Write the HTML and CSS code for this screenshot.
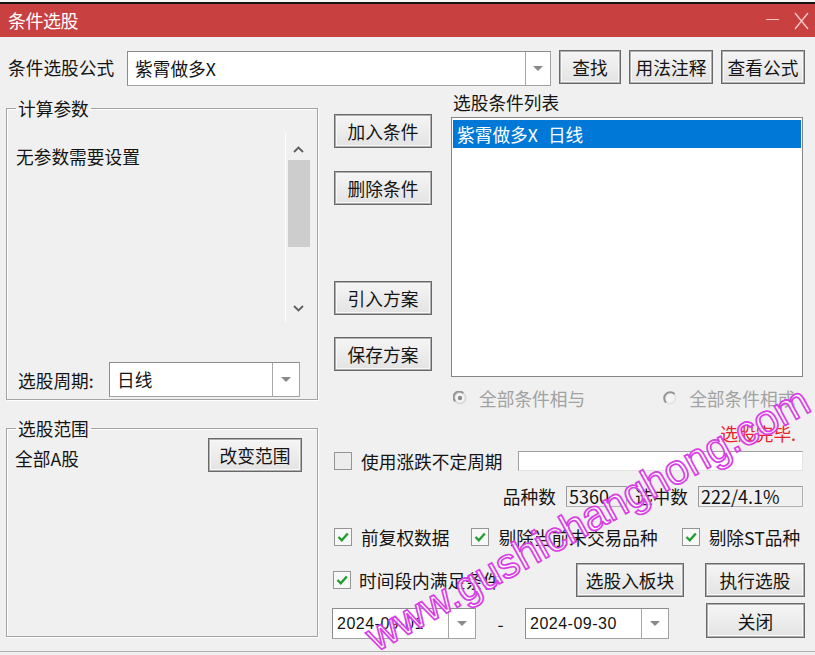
FILE: index.html
```html
<!DOCTYPE html>
<html lang="zh-CN">
<head>
<meta charset="utf-8">
<title>条件选股</title>
<link rel="stylesheet" href="styles.css">
</head>
<body>
<div class="win">
  <div class="strip"></div>
  <div class="titlebar">
    <span class="title">条件选股</span>
    <span class="ctrls">
      <span class="min"></span>
      <svg class="close" width="15" height="18" viewBox="0 0 15 18"><path d="M1 1 L14 17 M14 1 L1 17" stroke="#f6caca" stroke-width="1.3" fill="none"/></svg>
    </span>
  </div>
  <div class="body">
    <div class="formula-row">
      <span class="lbl-formula">条件选股公式</span>
      <div class="combo combo-formula"><span class="val">紫霄做多X</span><span class="drop"><i class="tri"></i></span></div>
      <button class="btn b-find">查找</button>
      <button class="btn b-wide">用法注释</button>
      <button class="btn b-wide">查看公式</button>
    </div>
    <div class="main">
      <div class="left">
        <fieldset class="grp grp-params">
          <legend>计算参数</legend>
          <div class="params">
            <span class="params-text">无参数需要设置</span>
            <div class="sb">
              <div class="sb-up"><svg width="11" height="7" viewBox="0 0 11 7"><polyline points="1,6 5.5,1.5 10,6" stroke="#5e5e5e" stroke-width="1.8" fill="none"/></svg></div>
              <div class="sb-thumb"></div>
              <div class="sb-fill"></div>
              <div class="sb-down"><svg width="11" height="7" viewBox="0 0 11 7"><polyline points="1,1 5.5,5.5 10,1" stroke="#5e5e5e" stroke-width="1.8" fill="none"/></svg></div>
            </div>
          </div>
          <div class="period">
            <span class="period-lbl">选股周期:</span>
            <div class="combo combo-period"><span class="val">日线</span><span class="drop"><i class="tri"></i></span></div>
          </div>
        </fieldset>
        <fieldset class="grp grp-range">
          <legend>选股范围</legend>
          <div class="range">
            <span class="range-text">全部A股</span>
            <button class="btn b-range">改变范围</button>
          </div>
        </fieldset>
      </div>
      <div class="right">
        <div class="upper">
          <div class="btncol">
            <button class="btn b-col b-add">加入条件</button>
            <button class="btn b-col b-del">删除条件</button>
            <button class="btn b-col b-imp">引入方案</button>
            <button class="btn b-col b-save">保存方案</button>
          </div>
          <div class="listcol">
            <div class="list-lbl">选股条件列表</div>
            <div class="listbox">
              <div class="list-item sel"><span>紫霄做多X</span><span class="tf">日线</span></div>
            </div>
            <div class="radios">
              <span class="radio r-and"><svg width="14" height="14" viewBox="0 0 14 14"><circle cx="7" cy="7" r="5.6" stroke="#d8d8d8" stroke-width="1.8" fill="#f4f4f4"/><path d="M2.2 10.2 A5.6 5.6 0 0 1 10.2 2.2" stroke="#959595" stroke-width="2" fill="none"/><circle cx="7" cy="7" r="2.2" fill="#8c8c8c"/></svg><span class="r-text">全部条件相与</span></span>
              <span class="radio r-or"><svg width="14" height="14" viewBox="0 0 14 14"><circle cx="7" cy="7" r="5.6" stroke="#e4e4e4" stroke-width="1.8" fill="#f4f4f4"/><path d="M3 11.6 A5.6 5.6 0 0 1 11.6 3" stroke="#959595" stroke-width="2" fill="none"/></svg><span class="r-text">全部条件相或</span></span>
            </div>
          </div>
        </div>
        <div class="done">选股完毕.</div>
        <div class="row-use">
          <span class="cb"></span>
          <span class="cb-text">使用涨跌不定周期</span>
          <span class="input"></span>
        </div>
        <div class="row-count">
          <span class="cnt-lbl">品种数</span>
          <span class="field f-num">5360</span>
          <span class="cnt-lbl cnt-lbl2">选中数</span>
          <span class="field f-sel">222/4.1%</span>
        </div>
        <div class="row-checks">
          <span class="cb on"><svg width="14" height="14" viewBox="0 0 14 14"><polyline points="2.5,7 5.8,10.3 11.8,3.5" stroke="#1e9e2a" stroke-width="2.3" fill="none"/></svg></span>
          <span class="cb-text">前复权数据</span>
          <span class="cb on c2"><svg width="14" height="14" viewBox="0 0 14 14"><polyline points="2.5,7 5.8,10.3 11.8,3.5" stroke="#1e9e2a" stroke-width="2.3" fill="none"/></svg></span>
          <span class="cb-text">剔除当前未交易品种</span>
          <span class="cb on c3"><svg width="14" height="14" viewBox="0 0 14 14"><polyline points="2.5,7 5.8,10.3 11.8,3.5" stroke="#1e9e2a" stroke-width="2.3" fill="none"/></svg></span>
          <span class="cb-text">剔除ST品种</span>
        </div>
        <div class="row-a">
          <span class="cb on c-time"><svg width="14" height="14" viewBox="0 0 14 14"><polyline points="2.5,7 5.8,10.3 11.8,3.5" stroke="#1e9e2a" stroke-width="2.3" fill="none"/></svg></span>
          <span class="cb-text t-time">时间段内满足条件</span>
          <button class="btn b-board">选股入板块</button>
          <button class="btn b-run">执行选股</button>
        </div>
        <div class="row-b">
          <div class="combo combo-date"><span class="val date">2024-09-01</span><span class="drop"><i class="tri"></i></span></div>
          <span class="dash">-</span>
          <div class="combo combo-date"><span class="val date">2024-09-30</span><span class="drop"><i class="tri"></i></span></div>
          <button class="btn b-close">关闭</button>
        </div>
      </div>
    </div>
  </div>
  <div class="bottom-line"></div>
  <div class="watermark">www.gushichanghong.com</div>
</div>
</body>
</html>
```
FILE: styles.css
```css
* { box-sizing: border-box; }
html, body { margin: 0; padding: 0; }
body {
  width: 815px;
  height: 655px;
  overflow: hidden;
  background: #f0f0f0;
  font-family: "Noto Sans CJK SC", "Noto Sans", sans-serif;
  font-size: 17.7px;
  color: #141414;
}
.win { position: relative; width: 815px; height: 655px; overflow: hidden; }
.strip { height: 4px; background: linear-gradient(#f6f6f6 0 45%, #151515 45%); }
.titlebar {
  height: 33px;
  background: #c94040;
  display: flex;
  align-items: center;
  padding: 0 6px 0 8px;
  color: #fff;
}
.title { font-size: 18px; line-height: 33px; letter-spacing: -0.5px; }
.ctrls { margin-left: auto; display: flex; align-items: center; }
.min { width: 13px; height: 1.5px; background: #f3c4c4; margin-right: 15px; margin-top: -2px; }
.close { display: block; }

.body { padding: 13px 10px 0 6px; }
.formula-row { display: flex; align-items: flex-start; height: 36px; padding-left: 2px; }
.lbl-formula { width: 119px; line-height: 35px; }
.combo {
  display: flex;
  background: #fff;
  border: 1px solid #a2a2a2;
  border-top-color: #8c8c8c;
  border-left-color: #8c8c8c;
}
.combo .val { flex: 1; padding-left: 7px; white-space: nowrap; }
.combo .drop {
  width: 25px;
  border-left: 1px solid #a8a8a8;
  display: flex;
  align-items: center;
  justify-content: center;
}
.tri {
  width: 0; height: 0;
  border-left: 5px solid transparent;
  border-right: 5px solid transparent;
  border-top: 5px solid #8a8a8a;
}
.combo-formula { width: 424px; height: 35px; margin-top: 1px; }
.combo-formula .val { line-height: 33px; }

.btn {
  font-family: inherit;
  font-size: 17.7px;
  color: #141414;
  padding: 0;
  height: 34px;
  border: 1px solid #6a6a6a;
  background: linear-gradient(#f5f5f5, #e3e3e3);
  box-shadow: inset 0 0 0 1px #aeaeae, inset 0 0 0 2px #f8f8f8;
  line-height: 30px;
  white-space: nowrap;
}
.b-find { width: 62px; margin-left: 8px; }
.b-wide { width: 84px; margin-left: 8px; }

.main { display: flex; align-items: flex-start; }
.left { width: 312px; }
.grp {
  margin: 0;
  padding: 0;
  min-width: 0;
  border: 1px solid #a3a3a3;
  box-shadow: inset 1px 1px 0 #fff, 1px 1px 0 #fff;
}
.grp legend { margin-left: 9px; padding: 0 2px; line-height: 20px; font-size: 17.7px; }
.grp-params { margin-top: 12px; }
.params { display: flex; margin-top: 15px; padding: 0 7px 0 9px; height: 189px; }
.params-text { margin-top: 11px; line-height: 24px; }
.sb {
  margin-left: auto;
  width: 25px;
  height: 189px;
  background: #f0f0f0;
  border-left: 1px solid #fdfdfd;
  display: flex;
  flex-direction: column;
  align-items: center;
}
.sb-up { height: 27px; padding-top: 13px; }
.sb-up svg, .sb-down svg { display: block; }
.sb-thumb { width: 22px; height: 87px; background: #cdcdcd; margin-left: 1px; }
.sb-fill { flex: 1; }
.sb-down { height: 27px; padding-top: 10px; }
.period { display: flex; align-items: center; margin-top: 40px; padding: 0 0 2px 11px; }
.period-lbl { width: 91px; line-height: 24px; }
.combo-period { width: 191px; height: 35px; }
.combo-period .val { line-height: 33px; }
.combo-period .drop { width: 27px; }

.grp-range { margin-top: 18px; }
.range { height: 198px; display: flex; justify-content: space-between; align-items: flex-start; padding: 0 15px 0 8px; }
.range-text { margin-top: 8px; line-height: 24px; }
.b-range { width: 94px; }

.right { width: 473px; margin-left: 14px; }
.upper { display: flex; align-items: flex-start; }
.btncol { width: 98px; margin-left: 2px; display: flex; flex-direction: column; }
.b-col { width: 98px; height: 34px; }
.b-add { margin-top: 28px; }
.b-del { margin-top: 23px; }
.b-imp { margin-top: 76px; }
.b-save { margin-top: 22px; }
.listcol { width: 352px; margin-left: 19px; padding-top: 5px; }
.list-lbl { line-height: 22px; padding-left: 2px; }
.listbox {
  margin-top: 4px;
  height: 260px;
  background: #fff;
  border: 1px solid #858585;
  padding: 2px 1px;
}
.list-item { height: 28px; line-height: 28px; padding-left: 4px; white-space: nowrap; }
.list-item.sel { background: #0078d7; color: #fff; }
.tf { margin-left: 10px; }
.radios { margin-top: 10px; height: 22px; display: flex; align-items: center; padding-left: 2px; color: #a2a2a2; }
.radio { display: flex; align-items: center; }
.radio svg { display: block; }
.r-text { margin-left: 12px; line-height: 22px; }
.r-or { margin-left: 78px; }

.done { margin-top: 13px; line-height: 22px; text-align: right; padding-right: 9px; color: #e8232a; }
.row-use { margin-top: 6px; height: 22px; display: flex; align-items: center; }
.cb {
  width: 18px;
  height: 18px;
  border: 1px solid #959595;
  background: #ececec;
  display: flex;
  align-items: center;
  justify-content: center;
  flex: none;
}
.cb.on { background: #f8f8f8; }
.cb svg { display: block; }
.row-use .cb { margin-left: 2px; }
.cb-text { margin-left: 9px; line-height: 22px; white-space: nowrap; }
.input {
  margin-left: auto;
  margin-right: 2px;
  width: 285px;
  height: 20px;
  background: #fff;
  border-top: 1px solid #a0a0a0;
  border-left: 1px solid #a0a0a0;
  border-right: 1px solid #e3e3e3;
  border-bottom: 1px solid #e3e3e3;
}
.row-count { margin-top: 14px; height: 21px; display: flex; justify-content: flex-end; align-items: center; padding-right: 2px; }
.cnt-lbl { line-height: 21px; }
.cnt-lbl2 { margin-left: 8px; }
.field {
  height: 21px;
  margin-left: 10px;
  border: 1px solid #b3b3b3;
  border-top-color: #9a9a9a;
  border-left-color: #9a9a9a;
  background: #f0f0f0;
  padding-left: 2px;
  line-height: 19px;
  font-size: 18px;
  white-space: nowrap;
}
.f-num { width: 61px; }
.f-sel { width: 105px; }
.row-checks { margin-top: 19px; height: 22px; display: flex; align-items: center; padding-left: 2px; }
.c2 { margin-left: 22px; }
.c3 { margin-left: 24px; }
.row-a { margin-top: 15px; height: 34px; display: flex; align-items: center; }
.c-time { margin-left: 1px; }
.t-time { margin-left: 8px; }
.b-board { width: 108px; margin-left: auto; }
.b-run { width: 100px; margin-left: 21px; }
.row-b { margin-top: 6px; display: flex; align-items: flex-start; }
.combo-date { width: 144px; height: 31px; margin-top: 5px; }
.combo-date .val.date {
  padding-left: 4px;
  font-family: "Liberation Sans", sans-serif;
  font-size: 16px;
  letter-spacing: 0.5px;
  line-height: 29px;
}
.combo-date .drop { width: 27px; }
.dash { width: 49px; margin-top: 5px; line-height: 31px; text-align: center; }
.b-close { width: 99px; height: 35px; margin-left: auto; }

.bottom-line { position: absolute; left: 0; right: 0; top: 651px; height: 1px; background: #b0b0b0; }
.watermark {
  position: absolute;
  left: 588px;
  top: 519px;
  transform: translate(-50%, -50%) rotate(-29deg);
  font-family: "Liberation Sans", sans-serif;
  font-size: 42px;
  line-height: 1.2;
  white-space: nowrap;
  color: rgba(255, 255, 255, 0.8);
  -webkit-text-stroke: 1.7px #d840e6;
  pointer-events: none;
}
```
